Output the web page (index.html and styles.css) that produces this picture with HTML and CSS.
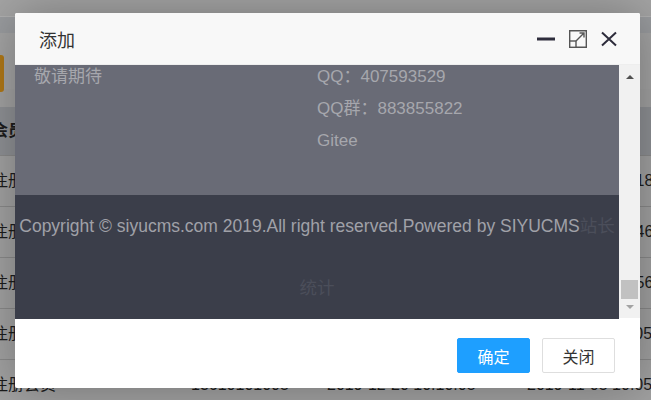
FILE: index.html
```html
<!DOCTYPE html>
<html>
<head>
  <meta charset="utf-8">
  <title>添加</title>
  <link rel="stylesheet" href="styles.css">
</head>
<body>
  <div class="page">
    <div class="topbar"></div>
    <div class="subbar"></div>
    <div class="toolbar"><span class="btn-orange"></span></div>
    <div class="table">
      <div class="row head"><span>会员</span><span>手机</span><span>注册时间</span><span>最后登录</span></div>
      <div class="row"><span>注册会员</span><span>13610101818</span><span>2019-12-28 17:40:18</span><span>2019-12-28 17:18</span></div>
      <div class="row"><span>注册会员</span><span>13610101046</span><span>2019-12-27 10:22:46</span><span>2019-12-27 10:46</span></div>
      <div class="row"><span>注册会员</span><span>13610101256</span><span>2019-12-25 09:13:56</span><span>2019-12-25 09:56</span></div>
      <div class="row"><span>注册会员</span><span>13610101305</span><span>2019-12-20 16:30:05</span><span>2019-11-05 10:05</span></div>
      <div class="row"><span>注册会员</span><span>13610101005</span><span>2019-12-20 10:10:05</span><span>2019-11-05 10:05</span></div>
    </div>
  </div>

  <div class="dialog">
    <div class="dialog-title">
      <span>添加</span>
      <div class="dialog-tools">
        <svg width="18" height="18" viewBox="0 0 18 18"><rect x="0" y="7.5" width="18" height="3" fill="#2e2d3c"/></svg>
        <svg width="18" height="18" viewBox="0 0 18 18" fill="none" stroke="#555" stroke-width="1.4">
          <path d="M0.7 11 V0.7 H17.3 V17.3 H7"/>
          <rect x="0.7" y="11" width="6.3" height="6.3"/>
          <path d="M7 11 L15 3 M10.5 3 H15 V7.5"/>
        </svg>
        <svg width="16" height="16" viewBox="0 0 16 16" stroke="#2e2d3c" stroke-width="2"><path d="M1 1.5 L15 14.5 M15 1.5 L1 14.5"/></svg>
      </div>
    </div>
    <div class="dialog-body">
      <div class="frame">
        <div class="info">
          <div class="info-inner">
            <div class="col col-left">敬请期待</div>
            <div class="col">
              <div>QQ：407593529</div>
              <div>QQ群：883855822</div>
              <div>Gitee</div>
            </div>
          </div>
        </div>
        <div class="copyright">Copyright © siyucms.com 2019.All right reserved.Powered by SIYUCMS<span class="stat">站长统计</span></div>
      </div>
      <div class="scrollbar">
        <span class="arrow-up"></span>
        <span class="thumb"></span>
        <span class="arrow-down"></span>
      </div>
    </div>
    <div class="dialog-foot">
      <button class="btn btn-primary">确定</button>
      <button class="btn">关闭</button>
    </div>
  </div>
</body>
</html>
```

FILE: styles.css
```css
body {
  margin: 0;
  font-family: "Liberation Sans", "Noto Sans CJK SC", sans-serif;
  background-color: #a2a2a2;
  width: 651px;
  height: 400px;
  overflow: hidden;
  position: relative;
}
.page {
  color: #1c1c1c;
}
.topbar {
  height: 16px;
  background-color: #a4a4a4;
  border-bottom: 1px solid #b0b0b0;
}
.subbar {
  height: 16px;
  background-color: #9a9c9f;
}
.toolbar {
  padding-top: 22px;
  height: 56px;
  box-sizing: border-box;
  background-color: #a4a4a4;
}
.btn-orange {
  display: block;
  width: 4px;
  height: 37px;
  background-color: #b07816;
  border-radius: 0 3px 3px 0;
}
.table {
  margin-top: 18px;
  margin-left: -8px;
  font-size: 16px;
}
.row {
  display: grid;
  grid-template-columns: 199px 136px 200px 1fr;
  height: 50px;
  line-height: 50px;
  border-top: 1px solid #8a8a8a;
  white-space: nowrap;
}
.row.head {
  height: 48px;
  line-height: 48px;
  border-top: 0;
  background-color: #8f9195;
  font-weight: bold;
}
.dialog {
  position: absolute;
  left: 15px;
  top: 13px;
  width: 625px;
  height: 375px;
  background-color: #fff;
  border-radius: 2px;
  overflow: hidden;
  display: flex;
  flex-direction: column;
  box-shadow: 1px 1px 50px rgba(0, 0, 0, 0.3);
}
.dialog-title {
  height: 52px;
  flex: none;
  box-sizing: border-box;
  border-bottom: 1px solid #eee;
  background-color: #f8f8f8;
  padding: 0 23px 0 24px;
  display: flex;
  align-items: center;
  justify-content: space-between;
  font-size: 18px;
  color: #333;
}
.dialog-tools {
  display: flex;
  align-items: center;
  gap: 14px;
}
.dialog-tools svg {
  display: block;
}
.dialog-body {
  height: 253px;
  flex: none;
  display: flex;
}
.frame {
  width: 604px;
  display: flex;
  flex-direction: column;
}
.info {
  height: 130px;
  flex: none;
  background-color: #696b76;
  overflow: hidden;
  color: #a6a7ad;
  font-size: 17px;
  line-height: 32px;
}
.info-inner {
  margin-top: -4px;
  display: grid;
  grid-template-columns: 302px 302px;
}
.col-left {
  padding-left: 19px;
}
.copyright {
  flex: 1;
  background-color: #3b3e4a;
  color: #a0a1a8;
  font-size: 17.5px;
  line-height: 62px;
  text-align: center;
}
.stat {
  color: #4b4e5a;
}
.scrollbar {
  width: 21px;
  background-color: #f1f1f1;
  display: flex;
  flex-direction: column;
  align-items: center;
  padding: 10px 0 9px;
  box-sizing: border-box;
}
.arrow-up {
  width: 0;
  height: 0;
  border-left: 4px solid transparent;
  border-right: 4px solid transparent;
  border-bottom: 4px solid #505050;
}
.thumb {
  margin-top: auto;
  width: 17px;
  height: 19px;
  background-color: #c1c1c1;
}
.arrow-down {
  margin-top: 6px;
  width: 0;
  height: 0;
  border-left: 4px solid transparent;
  border-right: 4px solid transparent;
  border-top: 4px solid #a3a3a3;
}
.dialog-foot {
  flex: 1;
  display: flex;
  justify-content: flex-end;
  gap: 12px;
  padding: 20px 25px 0;
}
.btn {
  width: 73px;
  height: 35px;
  border: 1px solid #dedede;
  border-radius: 2px;
  background-color: #fff;
  color: #333;
  font-family: "Noto Sans CJK SC", sans-serif;
  font-size: 16px;
  padding: 0;
}
.btn-primary {
  border-color: #1e9fff;
  background-color: #1e9fff;
  color: #fff;
}
```
